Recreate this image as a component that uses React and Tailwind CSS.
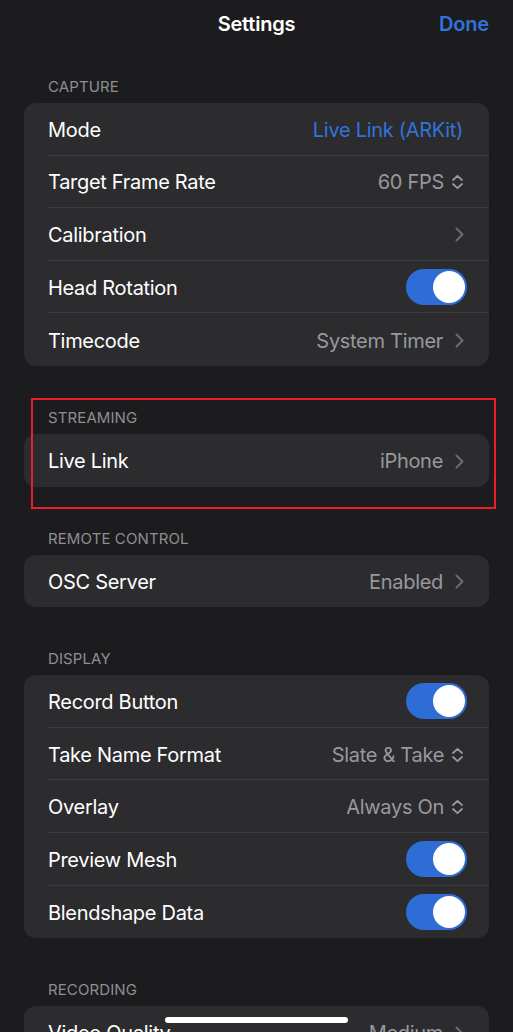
import React from "react";

const Chevron = () => (
  <svg width="9" height="15" viewBox="0 0 9 15" className="ml-[12px] shrink-0">
    <path d="M1.5 1.5 L7.5 7.5 L1.5 13.5" fill="none" stroke="#6c6c70" strokeWidth="2" strokeLinecap="round" strokeLinejoin="round" />
  </svg>
);

const UpDown = () => (
  <svg width="13" height="16" viewBox="0 0 13 16" className="ml-[7px] shrink-0">
    <path d="M2 6 L6.5 1.8 L11 6" fill="none" stroke="#98989f" strokeWidth="1.8" strokeLinecap="round" strokeLinejoin="round" />
    <path d="M2 10 L6.5 14.2 L11 10" fill="none" stroke="#98989f" strokeWidth="1.8" strokeLinecap="round" strokeLinejoin="round" />
  </svg>
);

const Toggle = () => (
  <div className="w-[61px] h-[36px] rounded-full bg-[#2f6dd6] flex items-center justify-end pr-[2px] mr-[-3px] mt-[-2px]">
    <div className="w-[32px] h-[32px] rounded-full bg-white" />
  </div>
);

function Row({ label, value, kind, last }) {
  return (
    <div className="h-[52.6px] pl-[24px] flex">
      <div
        className={
          "flex-1 h-full flex items-center justify-between pr-[25px] pt-[2px] " +
          (last ? "" : "border-b border-[#3b3b3d]")
        }
      >
        <span className="text-white text-[20px] tracking-[-0.3px]">{label}</span>
        {kind === "toggle" ? (
          <Toggle />
        ) : (
          <div className="flex items-center">
            <span
              className={
                "text-[20px] tracking-[-0.3px] " +
                (kind === "blue" ? "text-[#3273dc] mr-[1px]" : "text-[#98989f]")
              }
            >
              {value}
            </span>
            {kind === "chevron" && <Chevron />}
            {kind === "updown" && <UpDown />}
          </div>
        )}
      </div>
    </div>
  );
}

function Section({ title, rows, first }) {
  return (
    <div className={first ? "mt-[30px]" : "mt-[41px]"}>
      <div className="h-[20px] leading-[22px] pl-[48px] text-[15px] text-[#8e8e93] uppercase tracking-[0.1px] mb-[7px]">
        {title}
      </div>
      <div className="mx-[24px] bg-[#2c2c2e] rounded-[12px] overflow-hidden">
        {rows.map((r, i) => (
          <Row key={r.label} {...r} last={i === rows.length - 1} />
        ))}
      </div>
    </div>
  );
}

export default function App() {
  return (
    <div
      className="relative w-[513px] h-[1032px] overflow-hidden bg-[#1c1c1e]"
      style={{ fontFamily: "Inter, 'Noto Sans', sans-serif" }}
    >
      <div className="relative h-[46px] flex items-center justify-center pt-[2px]">
        <span className="text-white text-[20px] font-semibold tracking-[-0.2px]">Settings</span>
        <span className="absolute right-[24px] text-[#3273dc] text-[20px] font-semibold tracking-[-0.2px]">Done</span>
      </div>

      <Section
        first
        title="Capture"
        rows={[
          { label: "Mode", value: "Live Link (ARKit)", kind: "blue" },
          { label: "Target Frame Rate", value: "60 FPS", kind: "updown" },
          { label: "Calibration", value: "", kind: "chevron" },
          { label: "Head Rotation", kind: "toggle" },
          { label: "Timecode", value: "System Timer", kind: "chevron" },
        ]}
      />
      <Section
        title="Streaming"
        rows={[{ label: "Live Link", value: "iPhone", kind: "chevron" }]}
      />
      <Section
        title="Remote Control"
        rows={[{ label: "OSC Server", value: "Enabled", kind: "chevron" }]}
      />
      <Section
        title="Display"
        rows={[
          { label: "Record Button", kind: "toggle" },
          { label: "Take Name Format", value: "Slate & Take", kind: "updown" },
          { label: "Overlay", value: "Always On", kind: "updown" },
          { label: "Preview Mesh", kind: "toggle" },
          { label: "Blendshape Data", kind: "toggle" },
        ]}
      />
      <Section
        title="Recording"
        rows={[{ label: "Video Quality", value: "Medium", kind: "chevron" }]}
      />

      <div className="absolute left-[31px] top-[398px] w-[465px] h-[111px] border-2 border-[#e8202a]" />
      <div className="absolute left-[165px] bottom-[9px] w-[183px] h-[6px] rounded-full bg-white" />
    </div>
  );
}
